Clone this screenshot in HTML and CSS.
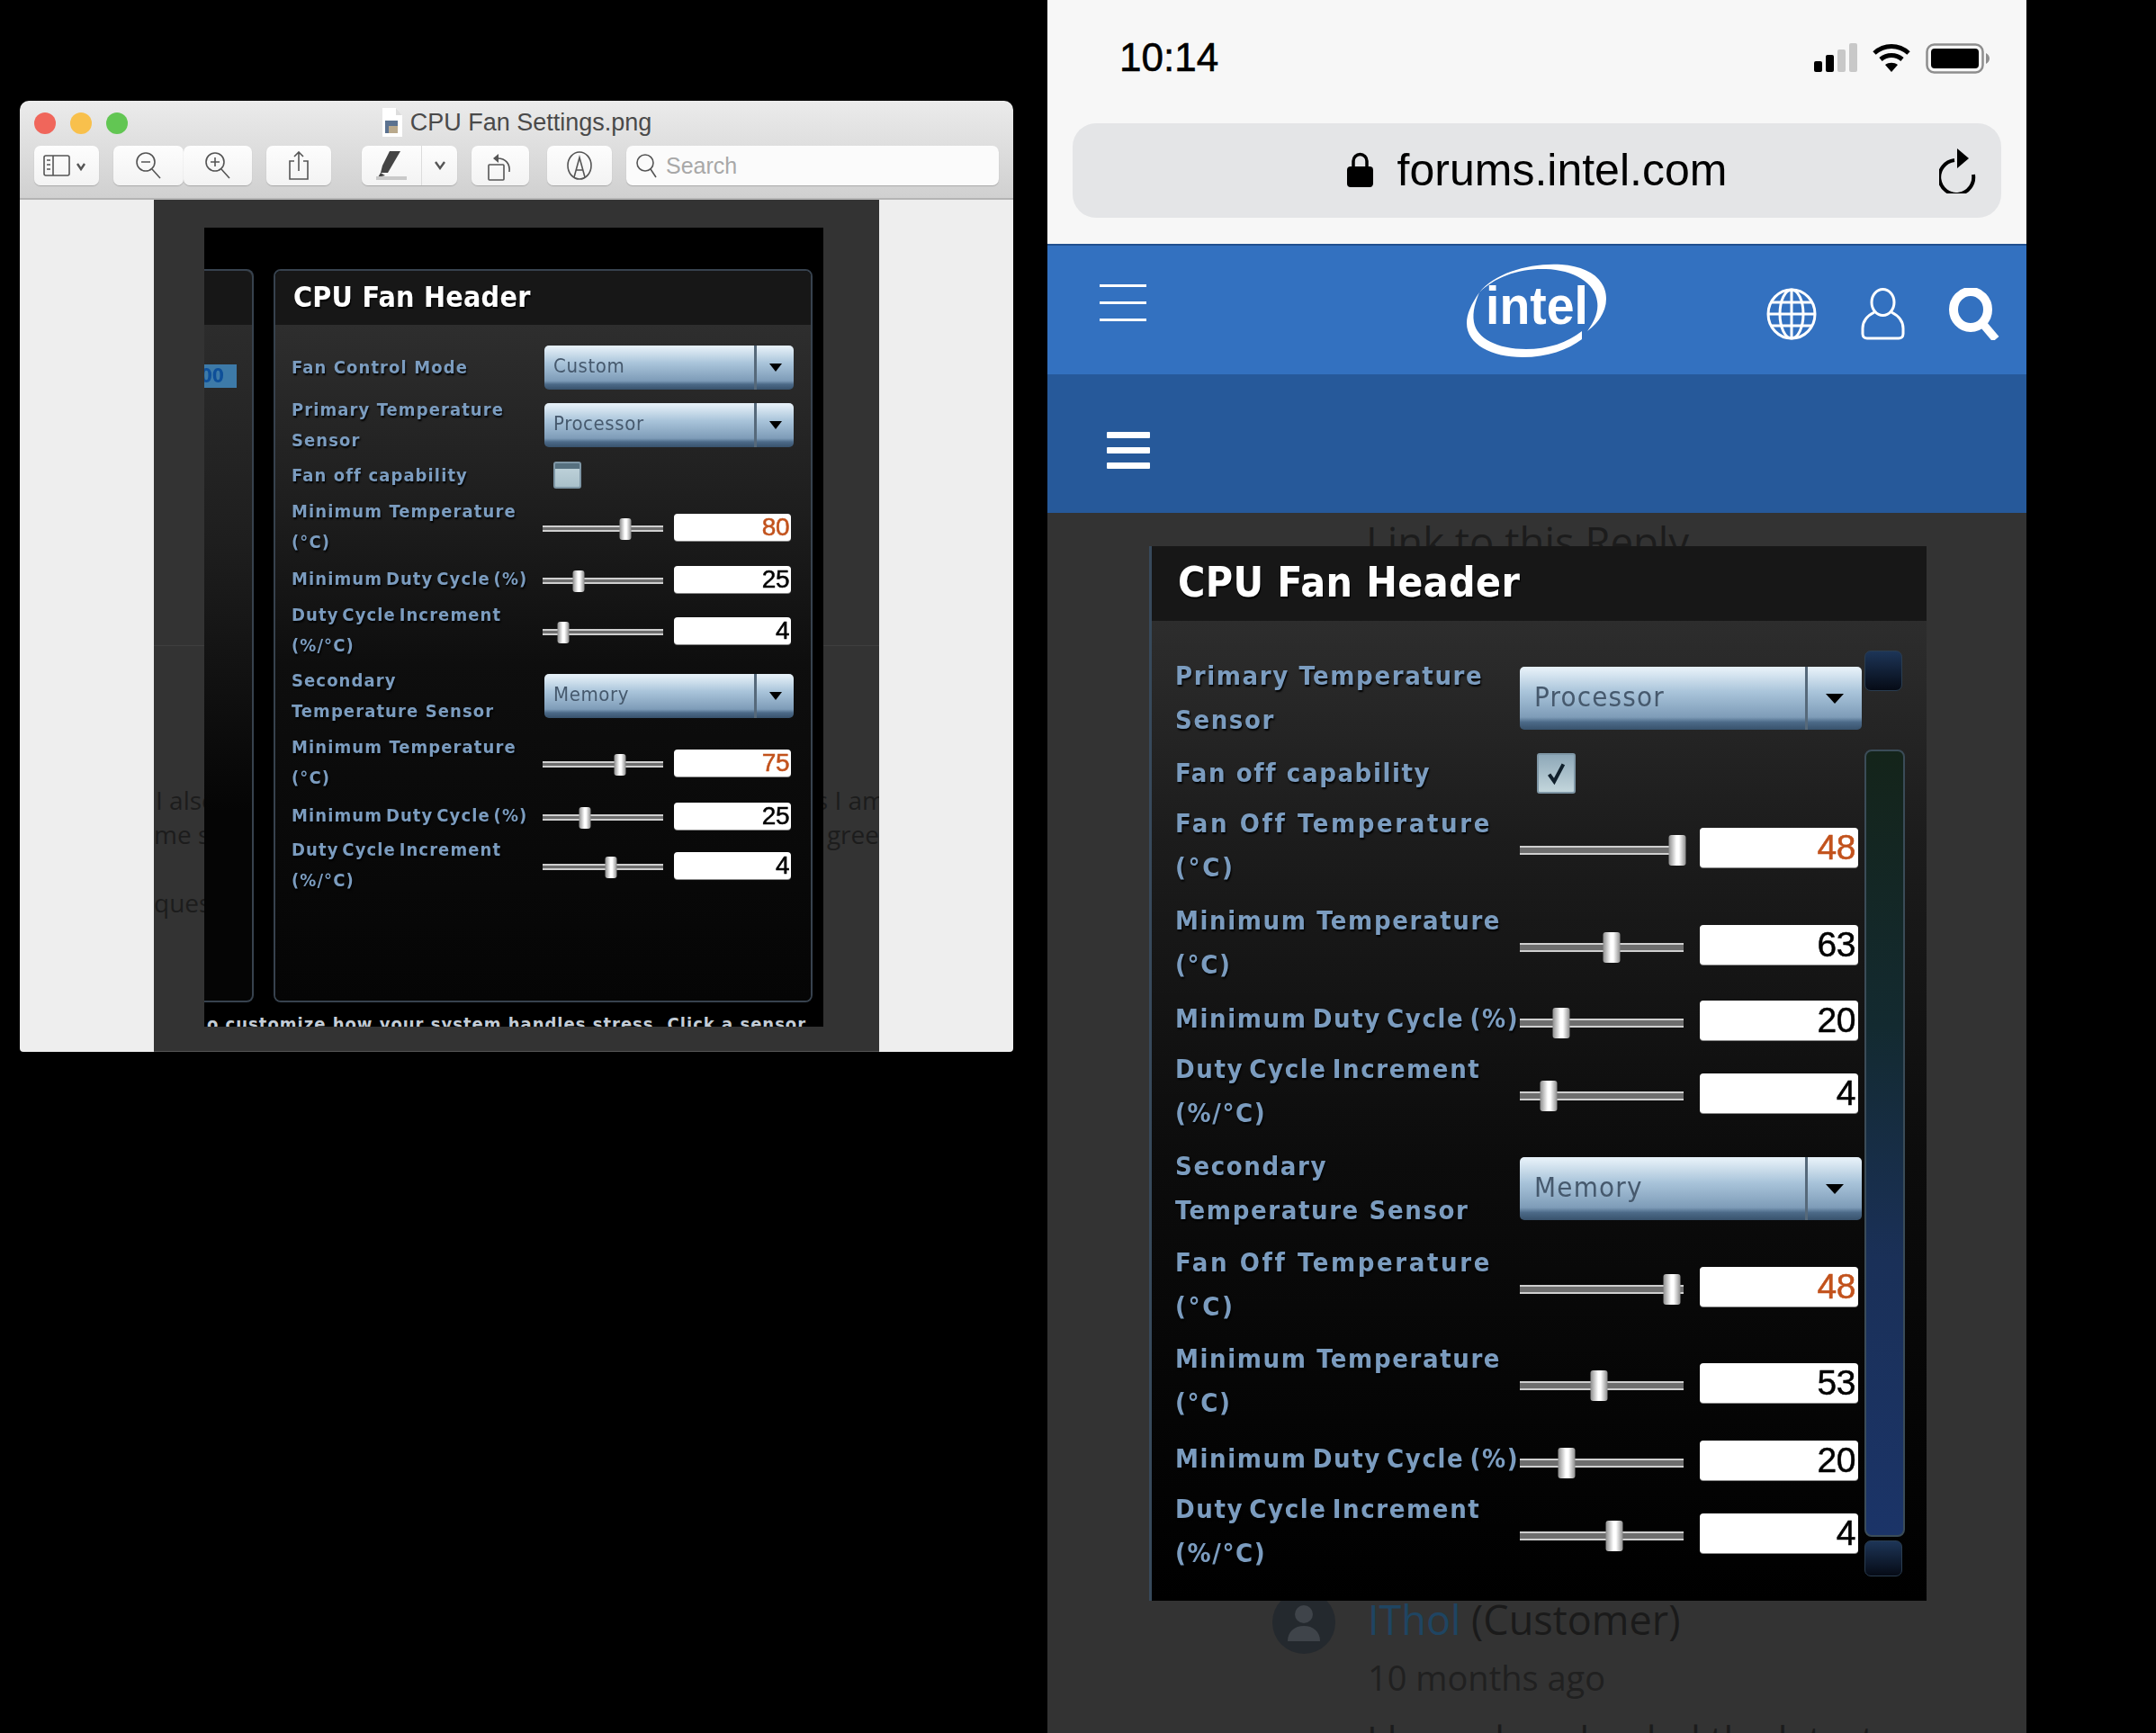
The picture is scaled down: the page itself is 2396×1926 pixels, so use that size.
FILE: index.html
```html
<!DOCTYPE html>
<html lang="en">
<head>
  <meta charset="utf-8">
  <title>CPU Fan Settings</title>
  <link rel="stylesheet" href="styles.css">
</head>
<body>
  <!-- Preview window -->
  <div class="window">
    <div class="titlebar">
      <div class="title-row">
        <div class="lights"><i class="light red"></i><i class="light yellow"></i><i class="light green"></i></div>
        <div class="title">
          <svg class="file-icon" viewBox="0 0 24 32"><path d="M1 0h15l7 8v24H1z" fill="#fff"/><path d="M16 0v8h7" fill="#ddd"/><rect x="4" y="14" width="14" height="14" fill="#5b7290"/><rect x="8" y="20" width="10" height="8" fill="#b9a98c"/></svg>
          <span>CPU Fan Settings.png</span>
        </div>
        <div></div>
      </div>
      <div class="toolbar">
        <div class="tool w72">
          <svg width="52" height="26" viewBox="0 0 52 26" fill="none" stroke="#555" stroke-width="1.6"><rect x="1" y="2" width="28" height="22" rx="2"/><path d="M11 2v22"/><path d="M4 7h4M4 12h4M4 17h4" stroke-width="1.4"/><path d="M38 11l4 6 4-6" stroke-width="2.4"/></svg>
        </div>
        <div class="tool w78 tight">
          <svg width="32" height="32" viewBox="0 0 32 32" fill="none" stroke="#555" stroke-width="1.6"><circle cx="13" cy="12" r="10"/><path d="M8 12h10M20 20l9 10"/></svg>
        </div>
        <div class="tool w76">
          <svg width="32" height="32" viewBox="0 0 32 32" fill="none" stroke="#555" stroke-width="1.6"><circle cx="13" cy="12" r="10"/><path d="M8 12h10M13 7v10M20 20l9 10"/></svg>
        </div>
        <div class="tool w72">
          <svg width="24" height="32" viewBox="0 0 24 32" fill="none" stroke="#555" stroke-width="1.6"><path d="M7 11H2v20h20V11h-5"/><path d="M12 22V1M7 6l5-5 5 5"/></svg>
        </div>
        <div class="tool w106 wide-gap split">
          <div class="split-main">
            <svg width="38" height="34" viewBox="0 0 38 34"><path d="M17 1h12L15 25H7l2-8z" fill="#444"/><path d="M7 25l-3 5 8-2z" fill="#444"/><rect x="2" y="29" width="34" height="4" fill="#c9c9c9"/></svg>
          </div>
          <div class="split-arrow">
            <svg width="14" height="10" viewBox="0 0 14 10" fill="none" stroke="#555" stroke-width="2.4"><path d="M2 1l5 7 5-7"/></svg>
          </div>
        </div>
        <div class="tool w64">
          <svg width="30" height="34" viewBox="0 0 30 34" fill="none" stroke="#555" stroke-width="1.6"><rect x="2" y="16" width="17" height="17" rx="1"/><path d="M25 24c1-9-4-15-13-15"/><path d="M13 4L7 9l6 5z" fill="#555" stroke="none"/></svg>
        </div>
        <div class="tool w72 roomy">
          <svg width="30" height="32" viewBox="0 0 30 32" fill="none" stroke="#555" stroke-width="1.6"><ellipse cx="15" cy="16" rx="13" ry="15"/><path d="M9 29l6-22 6 22M11.500 21h7"/></svg>
        </div>
        <div class="searchbox">
          <svg width="24" height="28" viewBox="0 0 24 28" fill="none" stroke="#555" stroke-width="1.6"><circle cx="11" cy="11" r="9"/><path d="M17 18l6 9"/></svg>
          <span>Search</span>
        </div>
      </div>
    </div>
    <div class="viewer">
      <div class="paper">
        <div class="paper-rule"></div>
        <div class="stray"><span>I also</span><span class="stray-end">s I am</span></div>
        <div class="stray two"><span>me s</span><span>gree</span></div>
        <div class="stray three"><span>quest</span></div>
        <div class="shot">
          <div class="shot-row">
            <div class="sliver">
              <div class="sliver-head"></div>
              <div class="sliver-chip"><span>00</span></div>
            </div>
            <div class="panel panel-small">
              <div class="panel-head">CPU Fan Header</div>
              <div class="panel-body">
                <div class="fan-grid">
                  <div class="lbl">Fan Control Mode</div>
                  <div class="ctl"><div class="dd"><span class="dd-value">Custom</span><span class="dd-arrow"></span></div></div>
                  <div class="lbl">Primary Temperature<br>Sensor</div>
                  <div class="ctl"><div class="dd"><span class="dd-value">Processor</span><span class="dd-arrow"></span></div></div>
                  <div class="lbl">Fan off capability</div>
                  <div class="ctl"><div class="chk"></div></div>
                  <div class="lbl">Minimum Temperature<br>(°C)</div>
                  <div class="ctl"><div class="slider"><i style="left:68.7%"></i></div><div class="num warn">80</div></div>
                  <div class="lbl duty">Minimum Duty Cycle (%)</div>
                  <div class="ctl"><div class="slider"><i style="left:29.9%"></i></div><div class="num">25</div></div>
                  <div class="lbl duty">Duty Cycle Increment<br>(%/°C)</div>
                  <div class="ctl"><div class="slider"><i style="left:17.2%"></i></div><div class="num">4</div></div>
                  <div class="lbl">Secondary<br>Temperature Sensor</div>
                  <div class="ctl"><div class="dd"><span class="dd-value">Memory</span><span class="dd-arrow"></span></div></div>
                  <div class="lbl">Minimum Temperature<br>(°C)</div>
                  <div class="ctl"><div class="slider"><i style="left:64.2%"></i></div><div class="num warn">75</div></div>
                  <div class="lbl duty">Minimum Duty Cycle (%)</div>
                  <div class="ctl"><div class="slider"><i style="left:35.1%"></i></div><div class="num">25</div></div>
                  <div class="lbl duty">Duty Cycle Increment<br>(%/°C)</div>
                  <div class="ctl"><div class="slider"><i style="left:56.7%"></i></div><div class="num">4</div></div>
                </div>
              </div>
            </div>
          </div>
          <div class="shot-note">o customize how your system handles stress. Click a sensor</div>
        </div>
      </div>
    </div>
  </div>

  <!-- Phone screenshot -->
  <div class="phone">
    <div class="status">
      <span class="clock">10:14</span>
      <div class="status-icons">
        <svg width="48" height="32" viewBox="0 0 48 32"><rect x="0" y="20" width="9" height="12" rx="2"/><rect x="13" y="13" width="9" height="19" rx="2"/><rect x="26" y="7" width="9" height="25" rx="2" fill="#c8c8c8"/><rect x="39" y="0" width="9" height="32" rx="2" fill="#c8c8c8"/></svg>
        <svg width="44" height="32" viewBox="0 0 44 32" fill="none" stroke="#000" stroke-width="5"><path d="M3 11c11-10 27-10 38 0"/><path d="M10 18c7-6 17-6 24 0"/><path d="M22 32l-7-8c4-3 10-3 14 0z" fill="#000" stroke="none"/></svg>
        <svg width="71" height="34" viewBox="0 0 71 34"><rect x="1.500" y="1.500" width="62" height="31" rx="8" fill="none" stroke="#8e8e8e" stroke-width="2.500"/><rect x="6" y="6" width="53" height="22" rx="4"/><path d="M67 11c2 1 4 3 4 6s-2 5-4 6z" fill="#8e8e8e"/></svg>
      </div>
    </div>
    <div class="urlbar">
      <svg class="lock" width="29" height="39" viewBox="0 0 29 39"><path d="M7 17V10a7.500 7.500 0 0 1 15 0v7" fill="none" stroke="#000" stroke-width="3.500"/><rect x="0" y="16" width="29" height="23" rx="4"/></svg>
      <span class="url-text">forums.intel.com</span>
      <svg class="reload" width="42" height="50" viewBox="0 0 42 50" fill="none" stroke="#000" stroke-width="4"><path d="M17 13A19 19 0 1 0 38 29"/><path d="M20 0l13 11-13 11z" fill="#000" stroke="none"/></svg>
    </div>
    <div class="site-bar">
      <div class="burger thin"><i></i><i></i><i></i></div>
      <svg class="intel" width="155" height="104" viewBox="0 0 155 104">
        <path d="M14 32C32 10 70-1 105 1c30 2 50 16 50 38 0 14-8 26-21 36 7-10 13-21 11-33C143 21 118 7 88 6 58 5 31 15 14 32z" fill="#fff"/>
        <path d="M14 32C5 45 0 56 0 66c0 24 28 38 62 38 28 0 50-8 66-20v-9c-16 13-38 20-62 20-32 0-55-12-58-30-2-12 2-23 6-33z" fill="#fff"/>
        <text x="21" y="67" class="intel-word" textLength="114" lengthAdjust="spacingAndGlyphs">intel</text>
      </svg>
      <div class="site-icons">
        <svg width="56" height="58" viewBox="0 0 56 58" fill="none" stroke="#fff" stroke-width="3"><ellipse cx="28" cy="29" rx="26" ry="27"/><ellipse cx="28" cy="29" rx="13" ry="27"/><path d="M28 2v54M5 16h46M5 42h46M2 29h52"/></svg>
        <svg width="49" height="58" viewBox="0 0 49 58" fill="none" stroke="#fff" stroke-width="3"><ellipse cx="24.500" cy="16" rx="12.500" ry="14.500"/><path d="M15 27C7 31 2 36 2 45v6c0 3 2 5 5 5h35c3 0 5-2 5-5v-6c0-9-5-14-13-18"/></svg>
        <svg width="57" height="58" viewBox="0 0 57 58" fill="none" stroke="#fff"><ellipse cx="24" cy="24" rx="19" ry="20" stroke-width="10"/><path d="M36 38l16 19" stroke-width="9"/></svg>
      </div>
    </div>
    <div class="site-nav">
      <div class="burger thick"><i></i><i></i><i></i></div>
    </div>
    <div class="thread">
      <div class="reply-link">Link to this Reply</div>
      <div class="panel panel-large">
        <div class="panel-head">CPU Fan Header</div>
        <div class="panel-body">
          <div class="fan-grid">
            <div class="lbl">Primary Temperature<br>Sensor</div>
            <div class="ctl"><div class="dd"><span class="dd-value">Processor</span><span class="dd-arrow"></span></div></div>
            <div class="lbl">Fan off capability</div>
            <div class="ctl"><div class="chk checked"><svg viewBox="0 0 24 24" fill="none" stroke="#10202c" stroke-width="3.500"><path d="M5 13l5 7 9-17"/></svg></div></div>
            <div class="lbl fan-off">Fan Off Temperature<br>(°C)</div>
            <div class="ctl"><div class="slider"><i style="left:96.2%"></i></div><div class="num warn">48</div></div>
            <div class="lbl">Minimum Temperature<br>(°C)</div>
            <div class="ctl"><div class="slider"><i style="left:56%"></i></div><div class="num">63</div></div>
            <div class="lbl duty">Minimum Duty Cycle (%)</div>
            <div class="ctl"><div class="slider"><i style="left:25.3%"></i></div><div class="num">20</div></div>
            <div class="lbl duty">Duty Cycle Increment<br>(%/°C)</div>
            <div class="ctl"><div class="slider"><i style="left:17.6%"></i></div><div class="num">4</div></div>
            <div class="lbl">Secondary<br>Temperature Sensor</div>
            <div class="ctl"><div class="dd"><span class="dd-value">Memory</span><span class="dd-arrow"></span></div></div>
            <div class="lbl fan-off">Fan Off Temperature<br>(°C)</div>
            <div class="ctl"><div class="slider"><i style="left:92.9%"></i></div><div class="num warn">48</div></div>
            <div class="lbl">Minimum Temperature<br>(°C)</div>
            <div class="ctl"><div class="slider"><i style="left:48.4%"></i></div><div class="num">53</div></div>
            <div class="lbl duty">Minimum Duty Cycle (%)</div>
            <div class="ctl"><div class="slider"><i style="left:28.6%"></i></div><div class="num">20</div></div>
            <div class="lbl duty">Duty Cycle Increment<br>(%/°C)</div>
            <div class="ctl"><div class="slider"><i style="left:57.7%"></i></div><div class="num">4</div></div>
          </div>
          <div class="scroll-btn top"></div>
          <div class="scroll-track"></div>
          <div class="scroll-btn bottom"></div>
        </div>
      </div>
      <div class="author">
        <div class="avatar">
          <svg width="36" height="42" viewBox="0 0 36 42" fill="#3f444a"><circle cx="18" cy="12" r="10"/><path d="M0 42c0-11 8-17 18-17s18 6 18 17z"/></svg>
        </div>
        <div>
          <div class="author-name"><a>IThol</a> (Customer)</div>
          <div class="author-age">10 months ago</div>
        </div>
      </div>
      <p class="reply-body">I have downloaded the latest</p>
    </div>
  </div>
</body>
</html>
```

FILE: styles.css
```css
html, body { margin: 0; background: #000; }
body { display: flex; align-items: flex-start; width: 2396px; height: 1926px; overflow: hidden; font-family: "Liberation Sans", sans-serif; }

/* Preview window */
.window { width: 1104px; height: 1057px; margin: 112px 0 0 22px; border-radius: 10px 10px 4px 4px; overflow: hidden; flex: none; display: flex; flex-direction: column; }
.titlebar { height: 110px; box-sizing: border-box; background: linear-gradient(#ebebeb, #d0d0d0); border-bottom: 2px solid #b4b4b4; flex: none; }
.title-row { display: grid; grid-template-columns: 1fr auto 1fr; align-items: center; height: 50px; }
.lights { display: flex; gap: 16px; padding-left: 16px; }
.light { width: 24px; height: 24px; border-radius: 50%; }
.light.red { background: #f0665b; }
.light.yellow { background: #f8c04c; }
.light.green { background: #62c653; }
.title { display: flex; align-items: center; gap: 8px; font-size: 27px; color: #4a4a4a; margin-bottom: 2px; }
.file-icon { width: 24px; height: 32px; }
.toolbar { display: flex; gap: 16px; padding: 0 16px; }
.tool { height: 44px; box-sizing: border-box; display: flex; align-items: center; justify-content: center; background: linear-gradient(#fdfdfd, #f3f3f3); border-radius: 7px; box-shadow: 0 1px 1px #a9a9a9; }
.w72 { width: 72px; }
.w78 { width: 78px; }
.w76 { width: 76px; }
.w106 { width: 106px; }
.w64 { width: 64px; }
.tool.tight { margin-right: -16px; }
.tool.wide-gap { margin-left: 18px; }
.tool.roomy { margin-left: 4px; }
.split-main { flex: 1; display: flex; justify-content: center; align-items: center; height: 100%; border-right: 1px solid #dcdcdc; }
.split-arrow { width: 39px; display: flex; justify-content: center; }
.searchbox { width: 414px; height: 44px; box-sizing: border-box; display: flex; align-items: center; gap: 10px; padding-left: 10px; background: #fbfbfb; border-radius: 7px; box-shadow: 0 1px 1px #a9a9a9; font-size: 25px; color: #a8a8a8; }
.viewer { flex: 1; background: #eee; display: flex; justify-content: center; }
.paper { width: 806px; background: #333; position: relative; border-bottom: 1px solid #555; box-sizing: border-box; }
.paper-rule { position: absolute; left: 0; right: 0; top: 495px; height: 1px; background: #3e3e3e; }
.stray { position: absolute; left: 2px; right: 0; top: 648px; display: flex; justify-content: space-between; overflow: hidden; font: 28px "Open Sans", sans-serif; color: #1c1c1c; white-space: nowrap; }
.stray.two { left: 0; top: 686px; }
.stray.three { left: 0; top: 762px; }
.stray-end { margin-right: -7px; }
.shot { position: relative; width: 688px; height: 888px; margin: 31px 0 0 56px; background: #000; overflow: hidden; }
.shot-row { display: flex; gap: 22px; padding-top: 46px; }
.shot-note { margin: 12px 0 0 3px; font: 700 20px "DejaVu Sans Condensed", "DejaVu Sans", sans-serif; letter-spacing: 1px; color: #c3ccd6; white-space: nowrap; }

/* Cut off neighbour panel */
.sliver { width: 55px; height: 815px; box-sizing: border-box; border: 2px solid #37424e; border-left: 0; border-radius: 0 8px 8px 0; background: linear-gradient(#2c2c2c 60px, #1e1e1e 300px, #050505 600px); filter: blur(.4px); }
.sliver-head { height: 60px; background: #171717; border-radius: 0 8px 0 0; }
.sliver-chip { width: 36px; height: 26px; margin-top: 44px; background: #3d7aa8; overflow: hidden; display: flex; justify-content: flex-end; padding-right: 14px; box-sizing: border-box; color: #0e4f99; font: 700 21px/26px "DejaVu Sans Condensed", "DejaVu Sans", sans-serif; }

/* Fan settings panel */
.panel { box-sizing: border-box; display: flex; flex-direction: column; font-family: "DejaVu Sans Condensed", "DejaVu Sans", sans-serif; filter: blur(.4px); }
.panel-head { background: #171717; color: #fff; font-weight: 700; display: flex; align-items: center; flex: none; text-shadow: 1px 2px 1px #000; box-sizing: border-box; }
.panel-body { position: relative; flex: 1; }
.fan-grid { display: grid; align-items: center; }
.lbl { color: #7b9cbf; font-weight: 700; white-space: nowrap; text-shadow: 1px 2px 2px #000; }
.ctl { display: flex; align-items: center; }
.dd { display: flex; box-sizing: border-box; background: linear-gradient(#e4eff7 4%, #a9c4da 40%, #7e9cb8 80%, #4c6a88 88%, #38526c); border-radius: 5px; color: #46596d; }
.dd-value { flex: 1; display: flex; align-items: center; border-right: 3px solid #56697a; }
.dd-arrow { position: relative; display: flex; align-items: center; justify-content: center; }
.dd-arrow::after { content: ""; border-style: solid; border-color: #000 transparent transparent; }
.chk { box-sizing: border-box; background: linear-gradient(#56707f 22%, #bcd0d8 24%, #a9c0ca); border: 2px solid #7f97a6; border-radius: 3px; }
.chk svg { display: block; width: 100%; height: 100%; }
.chk.checked { background: linear-gradient(#8ea8b8, #c3d6dc); }
.slider { position: relative; flex: none; box-sizing: border-box; background: #6e6e6e; border-style: solid; border-color: #cfcfcf; border-width: 2px 0; }
.slider i { position: absolute; transform: translateX(-50%); background: linear-gradient(90deg, #8c8c8c, #fff 45%, #fff 60%, #8c8c8c); border-radius: 3px; }
.num { flex: none; box-sizing: border-box; background: #fff; border-radius: 4px; color: #000; text-align: right; font-family: "Liberation Sans", sans-serif; box-shadow: 0 1px 0 #888; -webkit-text-stroke: .5px currentColor; }
.num.warn { color: #c2521c; }

.panel-small { width: 599px; height: 815px; border: 2px solid #37424e; border-radius: 8px; }
.panel-small .panel-head { height: 60px; padding: 0 0 3px 20px; font-size: 32px; letter-spacing: .2px; border-radius: 6px 6px 0 0; }
.panel-small .panel-body { padding: 15px 0 0 18px; background: linear-gradient(#2e2e2e, #1f1f1f 25%, #0e0e0e 50%, #050505); border-radius: 0 0 6px 6px; }
.panel-small .fan-grid { grid-template-columns: 279px 279px; grid-template-rows: 64px 64px 48px 66px 50px 64px 82px 66px 52px 58px; }
.panel-small .lbl { font-size: 20px; line-height: 34.500px; letter-spacing: 1.100px; }
.panel-small .lbl.duty { word-spacing: -3.500px; }
.panel-small .dd { width: 277px; height: 49px; margin-left: 2px; font-size: 22px; letter-spacing: .6px; }
.panel-small .dd-value { padding: 0 0 3px 10px; }
.panel-small .dd-arrow { width: 41px; }
.panel-small .dd-arrow::after { border-width: 9px 7px 0; }
.panel-small .chk { width: 31px; height: 30px; margin-left: 12px; }
.panel-small .slider { width: 134px; height: 7px; margin: 5px 12px 0 0; }
.panel-small .slider i { top: -10px; width: 13px; height: 24px; }
.panel-small .num { width: 130px; height: 30px; margin-top: 2px; padding-right: 2px; font-size: 28px; line-height: 30px; letter-spacing: -.5px; }

.panel-large { position: relative; z-index: 1; width: 864px; height: 1172px; margin-left: 113px; border-left: 3px solid #37495b; }
.panel-large .panel-head { height: 83px; padding: 0 0 4px 29px; font-size: 46px; letter-spacing: .4px; }
.panel-large .panel-body { padding: 32px 0 0 26px; background: linear-gradient(#2d2d2d, #1c1c1c 22%, #0c0c0c 55%, #000); }
.panel-large .fan-grid { grid-template-columns: 383px 380px; grid-template-rows: 110px 56px 106px 110px 58px 104px 112px 102px 112px 60px 102px; margin-top: -1px; }
.panel-large .lbl { font-size: 29px; line-height: 49px; letter-spacing: 1.600px; }
.panel-large .lbl.duty { word-spacing: -4.500px; }
.panel-large .lbl.fan-off { letter-spacing: 2.600px; }
.panel-large .dd { width: 380px; height: 70px; font-size: 31px; letter-spacing: 1.200px; }
.panel-large .dd-value { padding: 0 0 4px 16px; }
.panel-large .dd-arrow { width: 60px; }
.panel-large .dd-arrow::after { border-width: 11px 10px 0; }
.panel-large .chk { width: 43px; height: 45px; margin-left: 19px; padding: 6px; }
.panel-large .slider { width: 182px; height: 10px; margin: 9px 18px 0 0; }
.panel-large .slider i { top: -14px; width: 19px; height: 34px; }
.panel-large .num { width: 176px; height: 44px; margin-top: 3px; padding-right: 3px; font-size: 39px; line-height: 44px; letter-spacing: -.5px; }

.scroll-btn { position: absolute; left: 792px; width: 42px; height: 42px; box-sizing: border-box; background: linear-gradient(#1d3557, #060b16); border: 1px solid #2a3d50; border-radius: 7px; }
.scroll-btn.top { top: 33px; height: 45px; }
.scroll-btn.bottom { top: 1022px; height: 40px; }
.scroll-track { position: absolute; left: 792px; top: 143px; width: 45px; height: 875px; box-sizing: border-box; background: linear-gradient(#14241a, #132a30 35%, #1a3058 65%, #1b3468); border: 2px solid #3b4c58; border-radius: 8px; }

/* Phone */
.phone { width: 1088px; height: 1926px; margin-left: 38px; flex: none; overflow: hidden; background: #333; display: flex; flex-direction: column; }
.status { height: 137px; box-sizing: border-box; display: flex; justify-content: space-between; align-items: flex-start; padding: 48px 41px 0 80px; background: #f7f7f7; flex: none; }
.clock { font-size: 44px; line-height: 32px; color: #000; -webkit-text-stroke: .6px #000; }
.status-icons { display: flex; gap: 16px; align-items: flex-start; }
.urlbar { height: 134px; flex: none; box-sizing: border-box; padding-bottom: 29px; background: #f7f7f7; position: relative; display: flex; justify-content: center; }
.urlbar::before { content: ""; position: absolute; left: 28px; right: 28px; top: 0; height: 105px; border-radius: 26px; background: #e4e5e7; }
.lock { position: relative; margin: 32px 27px 0 0; }
.url-text { position: relative; font-size: 50px; line-height: 105px; color: #000; }
.reload { position: absolute; right: 55px; top: 28px; }
.site-bar { height: 145px; flex: none; box-sizing: border-box; background: #3371c0; border-top: 2px solid #21508f; display: flex; align-items: flex-start; padding: 19px 29px 0 58px; }
.burger { display: flex; flex-direction: column; flex: none; }
.burger i { display: block; background: #fff; }
.burger.thin { width: 52px; gap: 16px; margin-top: 24px; }
.burger.thin i { height: 3px; }
.burger.thick { width: 48px; gap: 10px; }
.burger.thick i { height: 7px; border-radius: 1px; }
.intel { margin: 1px 0 0 356px; flex: none; }
.intel-word { fill: #fff; font: 700 60px "Liberation Sans", sans-serif; }
.site-icons { display: flex; margin-left: auto; gap: 49px; margin-top: 28px; }
.site-nav { height: 154px; flex: none; box-sizing: border-box; background: #26599a; padding: 64px 0 0 66px; }
.thread { flex: 1; font-family: "Open Sans", sans-serif; }
.reply-link { height: 37px; padding-left: 354px; font-size: 45.500px; line-height: 62px; color: #1c1c1c; white-space: nowrap; }
.author { display: flex; gap: 36px; margin: -11px 0 0 250px; }
.avatar { width: 70px; height: 70px; border-radius: 50%; background: #24292e; display: flex; align-items: center; justify-content: center; flex: none; }
.author-name { font-size: 45px; line-height: 66px; color: #1a1a1a; white-space: nowrap; margin-top: -1px; }
.author-name a { color: #1f4562; }
.author-age { font-size: 38px; line-height: 62px; color: #202020; white-space: nowrap; }
.reply-body { margin: 8px 0 0 355px; font-size: 42px; line-height: 60px; color: #1c1c1c; white-space: nowrap; }
```
